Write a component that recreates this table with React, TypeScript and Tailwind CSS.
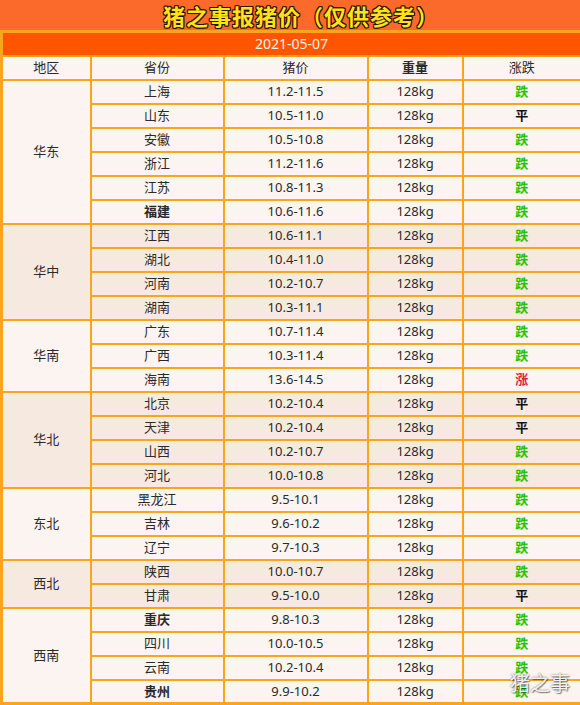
import React from "react";

type Row = { p: string; price: string; t: "跌" | "平" | "涨"; b?: boolean };
type Group = { region: string; rows: Row[] };

const groups: Group[] = [
  {
    region: "华东",
    rows: [
      { p: "上海", price: "11.2-11.5", t: "跌" },
      { p: "山东", price: "10.5-11.0", t: "平" },
      { p: "安徽", price: "10.5-10.8", t: "跌" },
      { p: "浙江", price: "11.2-11.6", t: "跌" },
      { p: "江苏", price: "10.8-11.3", t: "跌" },
      { p: "福建", price: "10.6-11.6", t: "跌", b: true },
    ],
  },
  {
    region: "华中",
    rows: [
      { p: "江西", price: "10.6-11.1", t: "跌" },
      { p: "湖北", price: "10.4-11.0", t: "跌" },
      { p: "河南", price: "10.2-10.7", t: "跌" },
      { p: "湖南", price: "10.3-11.1", t: "跌" },
    ],
  },
  {
    region: "华南",
    rows: [
      { p: "广东", price: "10.7-11.4", t: "跌" },
      { p: "广西", price: "10.3-11.4", t: "跌" },
      { p: "海南", price: "13.6-14.5", t: "涨" },
    ],
  },
  {
    region: "华北",
    rows: [
      { p: "北京", price: "10.2-10.4", t: "平" },
      { p: "天津", price: "10.2-10.4", t: "平" },
      { p: "山西", price: "10.2-10.7", t: "跌" },
      { p: "河北", price: "10.0-10.8", t: "跌" },
    ],
  },
  {
    region: "东北",
    rows: [
      { p: "黑龙江", price: "9.5-10.1", t: "跌" },
      { p: "吉林", price: "9.6-10.2", t: "跌" },
      { p: "辽宁", price: "9.7-10.3", t: "跌" },
    ],
  },
  {
    region: "西北",
    rows: [
      { p: "陕西", price: "10.0-10.7", t: "跌" },
      { p: "甘肃", price: "9.5-10.0", t: "平" },
    ],
  },
  {
    region: "西南",
    rows: [
      { p: "重庆", price: "9.8-10.3", t: "跌", b: true },
      { p: "四川", price: "10.0-10.5", t: "跌" },
      { p: "云南", price: "10.2-10.4", t: "跌" },
      { p: "贵州", price: "9.9-10.2", t: "跌", b: true },
    ],
  },
];

const cell =
  "border-2 border-[#fba51c] h-[24px] p-0 text-center align-middle text-[13px] leading-none text-[#2a2a2a]";

function Trend({ t }: { t: Row["t"] }) {
  if (t === "跌") return <span className="font-bold text-[#25c400]">跌</span>;
  if (t === "涨") return <span className="font-bold text-[#e8173a]">涨</span>;
  return <span className="font-bold text-[#111]">平</span>;
}

export default function App() {
  return (
    <div
      className="relative w-[580px] h-[705px] overflow-hidden bg-[#fb6b2c]"
      style={{ fontFamily: '"Noto Sans", "Noto Sans CJK SC", sans-serif' }}
    >
      <div className="h-[30px] flex items-center justify-center bg-[#fb6a2b] pl-[22px]">
        <span
          className="text-[22px] font-bold leading-[26px] tracking-[1px] text-[#ffe21a]"
          style={{
            fontFamily: '"Noto Sans CJK SC", sans-serif',
            textShadow:
              "1px 0 0 #2b1200, -1px 0 0 #2b1200, 0 1px 0 #2b1200, 0 -1px 0 #2b1200, 1px 1px 0 #2b1200, -1px -1px 0 #2b1200, 1px -1px 0 #2b1200, -1px 1px 0 #2b1200",
          }}
        >
          猪之事报猪价（仅供参考）
        </span>
      </div>
      <table className="w-[580px] table-fixed border-collapse border-[3px] border-[#fba51c]">
        <colgroup>
          <col className="w-[89px]" />
          <col className="w-[133px]" />
          <col className="w-[144px]" />
          <col className="w-[95px]" />
          <col className="w-[119px]" />
        </colgroup>
        <thead>
          <tr>
            <td
              colSpan={5}
              className="border-2 border-[#fba51c] h-[24px] p-0 text-center align-middle bg-[#ff5500] text-[14px] text-[#fff3e6]"
            >
              2021-05-07
            </td>
          </tr>
          <tr className="bg-[#fbf4f0]">
            <td className={cell}>地区</td>
            <td className={cell}>省份</td>
            <td className={cell}>猪价</td>
            <td className={cell + " font-bold"}>重量</td>
            <td className={cell}>涨跌</td>
          </tr>
        </thead>
        <tbody>
          {groups.map((g, gi) =>
            g.rows.map((r, ri) => (
              <tr key={g.region + r.p} className={gi % 2 === 0 ? "bg-[#fbf4f0]" : "bg-[#f6e9e0]"}>
                {ri === 0 && (
                  <td className={cell} rowSpan={g.rows.length}>
                    {g.region}
                  </td>
                )}
                <td className={cell + (r.b ? " font-bold" : "")}>{r.p}</td>
                <td className={cell}>{r.price}</td>
                <td className={cell}>128kg</td>
                <td className={cell}>
                  <Trend t={r.t} />
                </td>
              </tr>
            ))
          )}
        </tbody>
      </table>
      <div
        className="absolute right-[10px] bottom-[12px] text-[20px] leading-none text-white/90"
        style={{
          fontFamily: '"Noto Sans CJK SC", sans-serif',
          textShadow: "0 0 2px rgba(0,0,0,0.6), 1px 1px 1px rgba(0,0,0,0.4)",
        }}
      >
        猪之事
      </div>
    </div>
  );
}
